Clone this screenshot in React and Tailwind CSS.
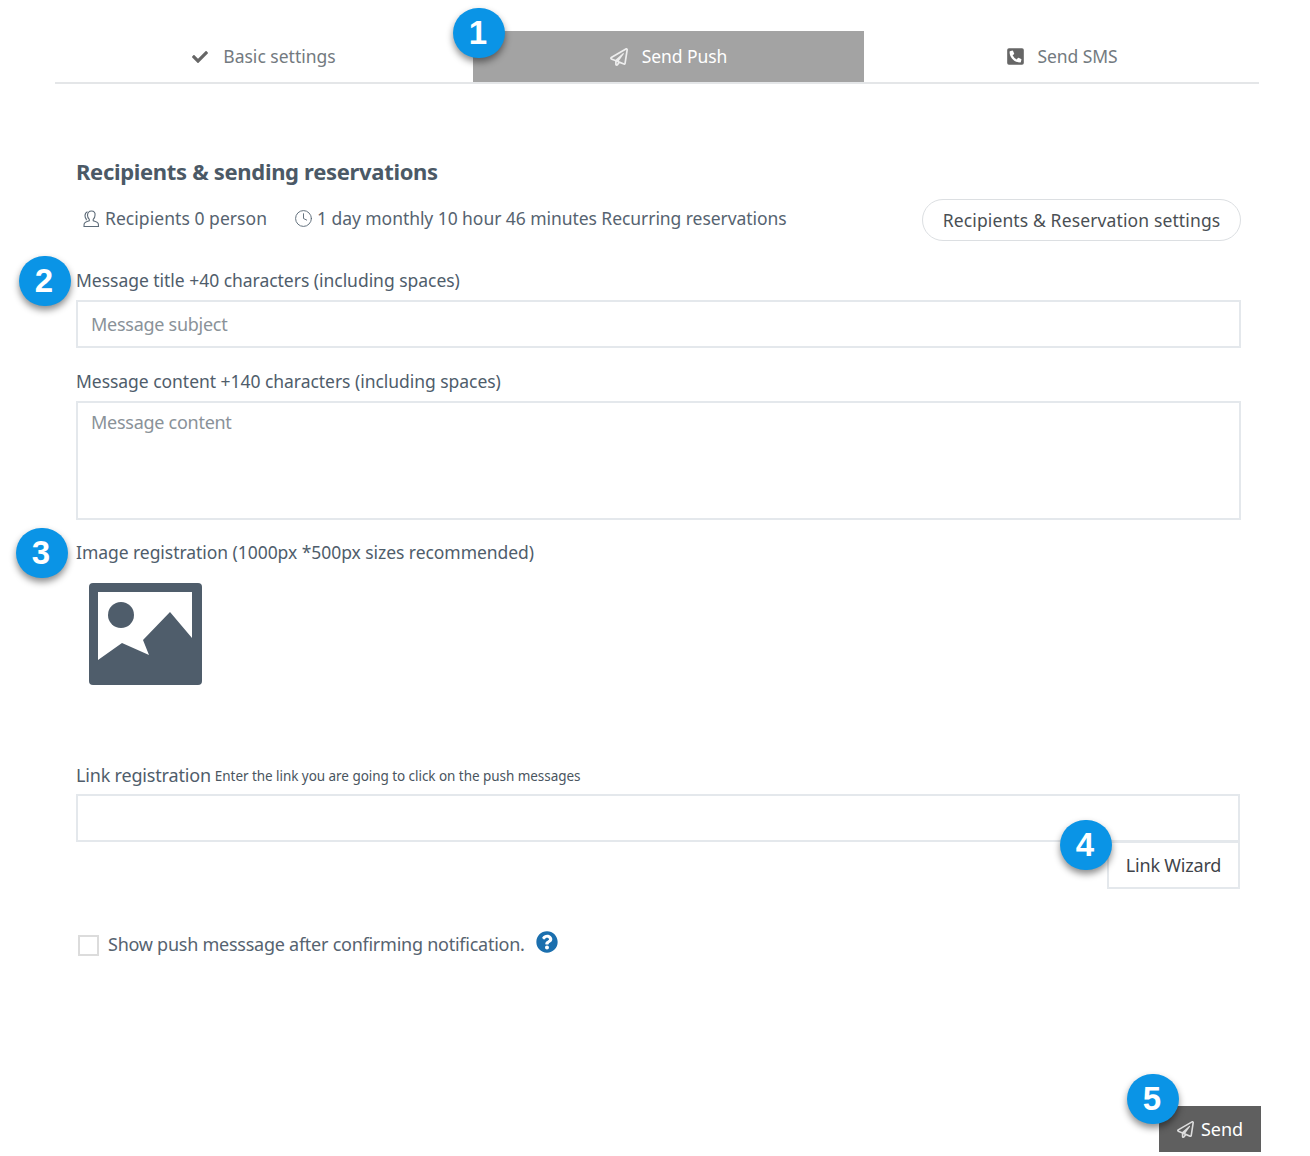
import React from 'react';
import { FaCheck, FaPhoneSquareAlt, FaQuestionCircle } from 'react-icons/fa';
import { FaRegPaperPlane } from 'react-icons/fa';
import { Clock } from 'lucide-react';

const Badge = ({ n, className }) => (
  <div className={`absolute w-[52px] h-[50px] pr-[2px] rounded-full bg-[#0a94e6] text-white flex items-center justify-center text-[33px] font-bold shadow-[0_4px_7px_rgba(0,0,0,0.45)] font-['Liberation_Sans',sans-serif] ${className}`}>
    {n}
  </div>
);

const PersonIcon = () => (
  <svg width="20" height="20" viewBox="0 0 20 20" fill="none" stroke="#5d6b78" strokeWidth="1.1">
    <path d="M10.5 2c-2.600 0-4 1.900-4 4.300 0 1.800.8 3.200 1.800 4.100v1.300c-1.800.7-4.300 1.500-4.900 2.500-.4.700-.4 2-.4 3.300h14.500c0-1.300 0-2.600-.4-3.300-.6-1-3.100-1.800-4.900-2.500v-1.300c1-.9 1.800-2.300 1.800-4.100C14.500 3.900 13.100 2 10.500 2z" />
    <path d="M6.500 2.800C4.700 3.500 4 5 4 6.800c0 1.400.5 2.500 1.300 3.300v1.200" />
  </svg>
);

const ImageIcon = () => (
  <svg width="113" height="102" viewBox="0 0 113 102">
    <rect x="0" y="0" width="113" height="102" rx="4" fill="#4f5d6b" />
    <path d="M9 9H103V55L81 29 54 57 60 72 33 60 9 77z" fill="#fff" />
    <circle cx="32" cy="32" r="13" fill="#4f5d6b" />
  </svg>
);

const App = () => {
  return (
    <div className="relative w-[1310px] h-[1156px] bg-white overflow-hidden font-['Noto_Sans',sans-serif] text-[#4f5d6b]">
      <div className="ml-[55px] mr-[51px] pt-[31px]">
        <div className="flex h-[53px] border-b-2 border-[#e4e6e8]">
          <div className="w-[418px] flex items-center justify-center gap-[15px] text-[#737a80] text-[17.5px]">
            <FaCheck className="text-[#666] text-[16px]" />
            <span>Basic settings</span>
          </div>
          <div className="w-[391px] h-[51px] bg-[#a3a3a3] flex items-center justify-center gap-[14px] text-white text-[17.5px] tracking-[-0.1px]">
            <FaRegPaperPlane className="text-[#eee] text-[18px]" />
            <span>Send Push</span>
          </div>
          <div className="flex-1 flex items-center justify-center gap-[13px] text-[#737a80] text-[17.5px] tracking-[-0.1px]">
            <FaPhoneSquareAlt className="text-[#666] text-[19px]" />
            <span>Send SMS</span>
          </div>
        </div>
      </div>

      <div className="ml-[76px] w-[1165px]">
        <h2 className="mt-[72px] h-[30px] leading-[30px] text-[22px] font-bold text-[#4b5966] tracking-[-0.32px]">Recipients &amp; sending reservations</h2>

        <div className="mt-[13px] h-[42px] flex items-center justify-between">
          <div className="flex items-center text-[17.5px] text-[#566370] pl-[5px] -mt-[3px]">
            <PersonIcon />
            <span className="ml-[4px] tracking-[0.05px]">Recipients 0 person</span>
            <Clock size={19} strokeWidth={1.2} className="ml-[27px] mr-[4px] text-[#5d6b78]" />
            <span className="tracking-[-0.06px]">1 day monthly 10 hour 46 minutes Recurring reservations</span>
          </div>
          <button className="w-[319px] h-[42px] rounded-full border border-[#dcdfe2] bg-white text-[#4a4f54] text-[17.5px] tracking-[0.13px]">
            Recipients &amp; Reservation settings
          </button>
        </div>

        <label className="block mt-[27px] h-[24px] leading-[24px] text-[17.5px] tracking-[-0.03px]">Message title +40 characters (including spaces)</label>
        <input
          placeholder="Message subject"
          className="block mt-[8px] w-full h-[48px] px-[13px] border-2 border-[#e4e8ec] text-[18px] tracking-[-0.27px] placeholder:text-[#8a9299] outline-none"
        />

        <label className="block mt-[21px] h-[24px] leading-[24px] text-[17.5px] tracking-[-0.04px]">Message content +140 characters (including spaces)</label>
        <textarea
          placeholder="Message content"
          className="block mt-[8px] w-full h-[119px] px-[13px] py-[6px] border-2 border-[#e4e8ec] text-[18px] tracking-[-0.27px] placeholder:text-[#8a9299] outline-none resize-none"
        />

        <label className="block mt-[20px] h-[24px] leading-[24px] text-[17.5px] tracking-[-0.05px]">Image registration (1000px *500px sizes recommended)</label>
        <div className="mt-[19px] ml-[13px] h-[102px]">
          <ImageIcon />
        </div>

        <div className="mt-[78px] h-[24px] flex items-baseline leading-[24px]">
          <span className="text-[18px] tracking-[-0.18px]">Link registration</span>
          <span className="ml-[4px] text-[13.5px] tracking-[-0.05px] text-[#4a5560] -translate-y-px">Enter the link you are going to click on the push messages</span>
        </div>
        <div className="w-[1164px]">
          <input className="block mt-[7px] w-full h-[48px] px-[14px] border-2 border-[#e4e8ec] outline-none" />
          <div className="flex justify-end -mt-[1px]">
            <button className="w-[133px] h-[48px] bg-white border-2 border-[#e4e8ec] text-[#3f444a] text-[18px] tracking-[-0.2px]">Link Wizard</button>
          </div>
        </div>

        <div className="mt-[40px] flex items-center h-[30px]">
          <span className="ml-[2px] w-[21px] h-[21px] border-2 border-[#dcdcdc] bg-white shrink-0 mt-[2px]" />
          <span className="ml-[9px] text-[18px] tracking-[-0.25px] text-[#566370]">Show push messsage after confirming notification.</span>
          <FaQuestionCircle className="ml-[11px] -mt-[4px] text-[#1b6fae] text-[22px]" />
        </div>
      </div>

      <div className="mt-[147px] ml-[1159px] w-[102px] h-[46px] bg-[#5f5f5f] text-white flex items-center justify-center gap-[7px] text-[18px]">
        <FaRegPaperPlane className="text-[#ddd] text-[17px]" />
        <span>Send</span>
      </div>

      <Badge n="1" className="left-[453px] top-[8px]" />
      <Badge n="2" className="left-[19px] top-[256px]" />
      <Badge n="3" className="left-[16px] top-[528px]" />
      <Badge n="4" className="left-[1060px] top-[820px]" />
      <Badge n="5" className="left-[1127px] top-[1074px]" />
    </div>
  );
};

export default App;
